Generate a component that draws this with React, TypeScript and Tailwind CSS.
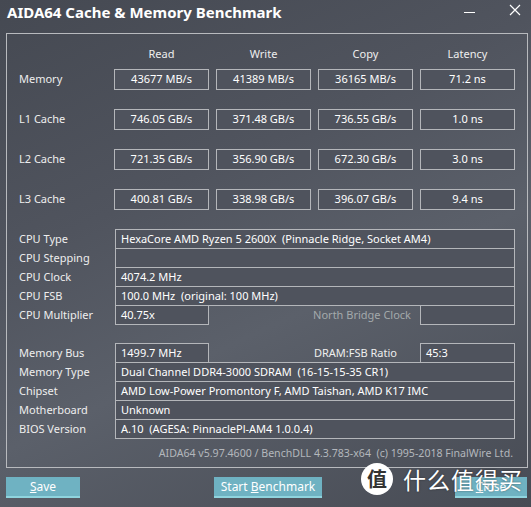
import React from 'react';

const rows = [
  { name: 'Memory', vals: ['43677 MB/s', '41389 MB/s', '36165 MB/s', '71.2 ns'] },
  { name: 'L1 Cache', vals: ['746.05 GB/s', '371.48 GB/s', '736.55 GB/s', '1.0 ns'] },
  { name: 'L2 Cache', vals: ['721.35 GB/s', '356.90 GB/s', '672.30 GB/s', '3.0 ns'] },
  { name: 'L3 Cache', vals: ['400.81 GB/s', '338.98 GB/s', '396.07 GB/s', '9.4 ns'] },
];

function Cell({ children, className = '' }: { children?: React.ReactNode; className?: string }) {
  return (
    <div className={`h-[20px] border border-[#b4b6ba] bg-[#4f535d] flex items-center px-[5px] text-white whitespace-pre ${className}`}>
      {children}
    </div>
  );
}

function InfoRow({ label, value, first = false }: { label: string; value: string; first?: boolean }) {
  return (
    <div className={`flex items-center ${first ? '' : '-mt-px'}`}>
      <div className="w-[96px]">{label}</div>
      <Cell className="flex-1">{value}</Cell>
    </div>
  );
}

export default function App() {
  return (
    <div className="w-[531px] h-[507px] relative overflow-hidden bg-[linear-gradient(155deg,#454952_0%,#50545e_35%,#5b606a_60%,#474b54_100%)] font-['Noto_Sans','Noto_Sans_CJK_SC',sans-serif] text-[11px] text-[#eeeeee] select-none">
      {/* Title bar */}
      <div className="h-[33px] flex items-start pl-[7px] pr-[10px] pt-[1px]">
        <div className="text-[15px] font-bold text-white leading-[22px]">AIDA64 Cache &amp; Memory Benchmark</div>
        <div className="ml-auto flex items-start gap-[34px] pt-[4px]">
          <div className="w-[11px] h-px bg-white mt-[7px]" />
          <svg width="12" height="12" viewBox="0 0 12 12" className="mt-[-1px]">
            <path d="M1 1 L11 11 M11 1 L1 11" stroke="#ffffff" strokeWidth="1.2" />
          </svg>
        </div>
      </div>

      {/* Group box */}
      <div className="ml-[6px] mr-[3px] h-[435px] border border-[#b8babe] pl-[12px] pr-[12px] pt-[10px]">
        {/* Header */}
        <div className="flex h-[20px] items-center">
          <div className="w-[96px]" />
          <div className="grid grid-cols-[95px_95px_95px_95px] gap-x-[7px] text-center">
            <div>Read</div>
            <div>Write</div>
            <div>Copy</div>
            <div>Latency</div>
          </div>
        </div>

        <div className="mt-[5px] flex flex-col gap-[19px]">
          {rows.map((r) => (
            <div key={r.name} className="flex items-center">
              <div className="w-[96px]">{r.name}</div>
              <div className="grid grid-cols-[95px_95px_95px_95px] gap-x-[7px]">
                {r.vals.map((v, i) => (
                  <Cell key={i} className="justify-center h-[21px]">{v}</Cell>
                ))}
              </div>
            </div>
          ))}
        </div>

        {/* CPU info */}
        <div className="mt-[19px] w-[496px]">
          <InfoRow first label="CPU Type" value="HexaCore AMD Ryzen 5 2600X  (Pinnacle Ridge, Socket AM4)" />
          <InfoRow label="CPU Stepping" value="" />
          <InfoRow label="CPU Clock" value="4074.2 MHz" />
          <InfoRow label="CPU FSB" value="100.0 MHz  (original: 100 MHz)" />
          <div className="flex items-center -mt-px">
            <div className="w-[96px]">CPU Multiplier</div>
            <Cell className="w-[94px]">40.75x</Cell>
            <div className="flex-1 text-right pr-[9px] text-[#a3a9ab]">North Bridge Clock</div>
            <Cell className="w-[95px]" />
          </div>
        </div>

        {/* Memory info */}
        <div className="mt-[18px] w-[496px]">
          <div className="flex items-center">
            <div className="w-[96px]">Memory Bus</div>
            <Cell className="w-[94px]">1499.7 MHz</Cell>
            <div className="flex-1 text-right pr-[23px]">DRAM:FSB Ratio</div>
            <Cell className="w-[95px]">45:3</Cell>
          </div>
          <InfoRow label="Memory Type" value="Dual Channel DDR4-3000 SDRAM  (16-15-15-35 CR1)" />
          <InfoRow label="Chipset" value="AMD Low-Power Promontory F, AMD Taishan, AMD K17 IMC" />
          <InfoRow label="Motherboard" value="Unknown" />
          <InfoRow label="BIOS Version" value="A.10  (AGESA: PinnaclePl-AM4 1.0.0.4)" />
        </div>

        <div className="mt-[7px] w-[496px] text-right text-[10.6px] text-[#b3b7bc] whitespace-pre pr-[2px]">
          AIDA64 v5.97.4600 / BenchDLL 4.3.783-x64  (c) 1995-2018 FinalWire Ltd.
        </div>
      </div>

      {/* Buttons */}
      <div className="flex items-start mt-[9px] px-[6px] text-[12px] text-white">
        <button className="w-[74px] h-[21px] bg-[#6fb2c2] border-b-2 border-[#8fd4de] leading-[19px]">
          <span className="underline">S</span>ave
        </button>
        <button className="ml-[134px] w-[108px] h-[21px] bg-[#6fb2c2] border-b-2 border-[#8fd4de] leading-[19px]">
          Start <span className="underline">B</span>enchmark
        </button>
        <button className="ml-auto mr-[-2px] w-[72px] h-[21px] bg-[#6fb2c2] border-b-2 border-[#8fd4de] leading-[19px]">
          <span className="underline">C</span>lose
        </button>
      </div>

      {/* Watermark */}
      <div className="absolute left-[361px] top-[463px] flex items-center gap-[10px] font-['Noto_Sans_CJK_SC',sans-serif]">
        <div className="w-[32px] h-[32px] rounded-full bg-white flex items-center justify-center text-[#333] text-[20px] font-bold leading-none">
          值
        </div>
        <div className="text-white text-[23px] leading-none tracking-[1px] [text-shadow:0_0_2px_rgba(0,0,0,0.5)]">
          什么值得买
        </div>
      </div>
    </div>
  );
}
